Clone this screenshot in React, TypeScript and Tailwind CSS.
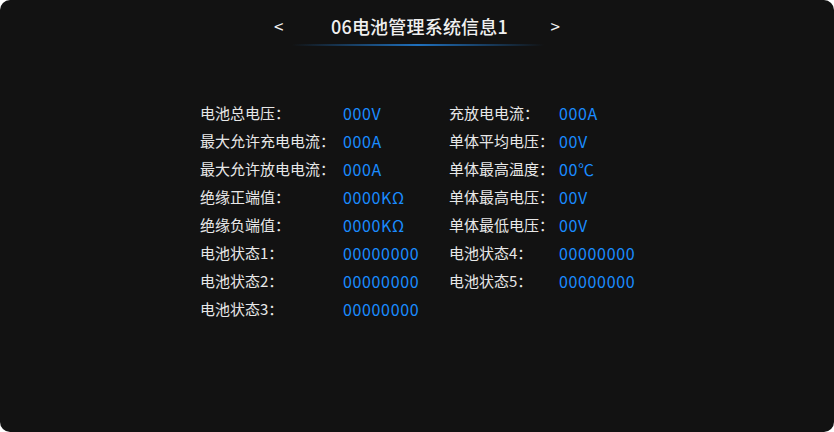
import React from 'react';

const left: [string, string][] = [
    ['电池总电压：', '000V'],
    ['最大允许充电电流：', '000A'],
    ['最大允许放电电流：', '000A'],
    ['绝缘正端值：', '0000KΩ'],
    ['绝缘负端值：', '0000KΩ'],
    ['电池状态1：', '00000000'],
    ['电池状态2：', '00000000'],
    ['电池状态3：', '00000000'],
];

const right: [string, string][] = [
    ['充放电电流：', '000A'],
    ['单体平均电压：', '00V'],
    ['单体最高温度：', '00℃'],
    ['单体最高电压：', '00V'],
    ['单体最低电压：', '00V'],
    ['电池状态4：', '00000000'],
    ['电池状态5：', '00000000'],
];

const Row = ({ label, value, labelW }: { label: string; value: string; labelW: string }) => (
    <div className="flex items-center h-[28px] whitespace-nowrap">
        <span className={`${labelW} shrink-0 text-[#e8e8e8]`}>{label}</span>
        <span className="text-[#1a8cff] text-[16px] tracking-[0.65px]">{value}</span>
    </div>
);

export default function App() {
    return (
        <div className="w-[834px] h-[432px] bg-white">
            <div
                className="w-[834px] h-[432px] bg-[#121212] rounded-[10px] overflow-hidden"
                style={{ fontFamily: '"Noto Sans CJK SC", "Noto Sans", sans-serif' }}
            >
                <div className="relative h-[52px] flex items-center justify-center">
                    <div className="flex items-center text-[#f0f0f0] whitespace-nowrap">
                        <span className="text-[17px] w-[57px] text-left">&lt;</span>
                        <span className="text-[18px] font-medium w-[172px] text-center tracking-[0.2px]">06电池管理系统信息1</span>
                        <span className="text-[17px] w-[57px] text-right">&gt;</span>
                    </div>
                    <div className="absolute left-[292px] top-[44px] w-[252px] h-[2px] bg-gradient-to-r from-transparent via-[#1f70bd] to-transparent" />
                </div>
                <div className="flex pl-[200px] pt-[47px] text-[15px]">
                    <div className="w-[249px]">
                        {left.map(([l, v]) => (
                            <Row key={l} label={l} value={v} labelW="w-[143px]" />
                        ))}
                    </div>
                    <div>
                        {right.map(([l, v]) => (
                            <Row key={l} label={l} value={v} labelW="w-[110px]" />
                        ))}
                    </div>
                </div>
            </div>
        </div>
    );
}
